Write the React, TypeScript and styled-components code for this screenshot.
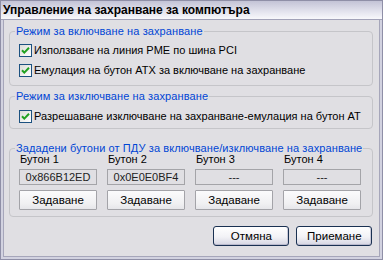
import React from "react";
import styled, { createGlobalStyle } from "styled-components";

const GlobalStyle = createGlobalStyle`
    html, body {
        margin: 0;
        padding: 0;
        background: #e0dfe3;
    }
    * {
        box-sizing: border-box;
    }
`;

const Window = styled.div`
    width: 383px;
    height: 260px;
    display: flex;
    flex-direction: column;
    border: 1px solid #8f8fa7;
    background: #e0dfe3;
    font-family: "Liberation Sans", Arial, sans-serif;
    font-size: 11px;
    color: #000;
`;

const TitleBar = styled.div`
    flex: none;
    height: 19px;
    display: flex;
    align-items: center;
    padding-left: 2px;
    background: linear-gradient(#c3c3d6, #e4e4ee 60%, #f8f8fb);
    border-bottom: 1px solid #a2a2b8;
    font-weight: bold;
    font-size: 12px;
    white-space: nowrap;
`;

const Frame = styled.div`
    flex: 1;
    display: flex;
    border: 2px solid #d2d2e0;
    border-top: none;
`;

const Body = styled.div`
    flex: 1;
    display: flex;
    flex-direction: column;
    border: 1px solid #a6a6ba;
    border-top: none;
    padding: 5px 6px 0 5px;
`;

const Group = styled.fieldset<{ $gap: number; $pt: number; $pb: number }>`
    margin: ${(p) => p.$gap}px 0 0;
    padding: ${(p) => p.$pt}px 9px ${(p) => p.$pb}px;
    border: 1px solid #c5c5c9;
    border-radius: 4px;
    min-width: 0;
`;

const Legend = styled.legend`
    margin-left: -4px;
    padding: 0 1px;
    color: #0046d5;
    line-height: 13px;
    letter-spacing: 0.1px;
    white-space: nowrap;
`;

const CheckRow = styled.label`
    height: 20px;
    display: flex;
    align-items: center;
    gap: 2px;
    white-space: nowrap;
`;

const Box = styled.span`
    width: 13px;
    height: 13px;
    flex: none;
    border: 1px solid #1c5180;
    background: linear-gradient(135deg, #dcdcd7, #ffffff);
    display: flex;
    align-items: center;
    justify-content: center;
`;

const Check = () => (
    <Box>
        <svg width="11" height="11" viewBox="0 0 11 11">
            <polyline
                points="2,5.2 4.3,7.6 9,2.8"
                fill="none"
                stroke="#21a121"
                strokeWidth="2"
            />
        </svg>
    </Box>
);

const Grid = styled.div`
    display: grid;
    grid-template-columns: repeat(4, 78px);
    column-gap: 10px;
`;

const Column = styled.div`
    display: flex;
    flex-direction: column;
`;

const Caption = styled.div`
    margin-top: -2px;
    line-height: 13px;
    padding-left: 1px;
`;

const Field = styled.div`
    margin-top: 3px;
    height: 16px;
    border: 1px solid #a4a4a8;
    display: flex;
    align-items: center;
    justify-content: center;
    background: #e0dfe3;
    color: #222;
`;

const SetButton = styled.div`
    margin-top: 5px;
    height: 20px;
    border: 1px solid #a3a3a8;
    border-radius: 1px;
    background: linear-gradient(#fbfbfc, #f0f0f2 70%, #e6e6ea);
    display: flex;
    align-items: center;
    justify-content: center;
    font-size: 11.5px;
`;

const Footer = styled.div`
    margin-top: 9px;
    display: flex;
    justify-content: flex-end;
    gap: 7px;
    padding-right: 1px;
`;

const DialogButton = styled.div`
    width: 76px;
    height: 20px;
    border: 1px solid #1a3152;
    border-radius: 3px;
    background: linear-gradient(#ffffff, #f2f2f6 55%, #d6d6e2);
    box-shadow: inset 0 -1px 0 #b9b9cc, inset -1px 0 0 #c9c9d8;
    display: flex;
    align-items: center;
    justify-content: center;
    font-size: 11.5px;
`;

const remotes = [
    { name: "Бутон 1", code: "0x866B12ED" },
    { name: "Бутон 2", code: "0x0E0E0BF4" },
    { name: "Бутон 3", code: "---" },
    { name: "Бутон 4", code: "---" },
];

export default function App() {
    return (
        <>
            <GlobalStyle />
            <Window>
                <TitleBar>Управление на захранване за компютъра</TitleBar>
                <Frame>
                    <Body>
                        <Group $gap={0} $pt={2} $pb={5}>
                            <Legend>Режим за включване на захранване</Legend>
                            <CheckRow>
                                <Check />
                                Използване на линия PME по шина PCI
                            </CheckRow>
                            <CheckRow>
                                <Check />
                                Емулация на бутон ATX за включване на захранване
                            </CheckRow>
                        </Group>
                        <Group $gap={4} $pt={3} $pb={2}>
                            <Legend>Режим за изключване на захранване</Legend>
                            <CheckRow>
                                <Check />
                                Разрешаване изключване на захранване-емулация на бутон AT
                            </CheckRow>
                        </Group>
                        <Group $gap={13} $pt={0} $pb={6}>
                            <Legend>
                                Зададени бутони от ПДУ за включване/изключване на захранване
                            </Legend>
                            <Grid>
                                {remotes.map((r) => (
                                    <Column key={r.name}>
                                        <Caption>{r.name}</Caption>
                                        <Field>{r.code}</Field>
                                        <SetButton>Задаване</SetButton>
                                    </Column>
                                ))}
                            </Grid>
                        </Group>
                        <Footer>
                            <DialogButton>Отмяна</DialogButton>
                            <DialogButton>Приемане</DialogButton>
                        </Footer>
                    </Body>
                </Frame>
            </Window>
        </>
    );
}
